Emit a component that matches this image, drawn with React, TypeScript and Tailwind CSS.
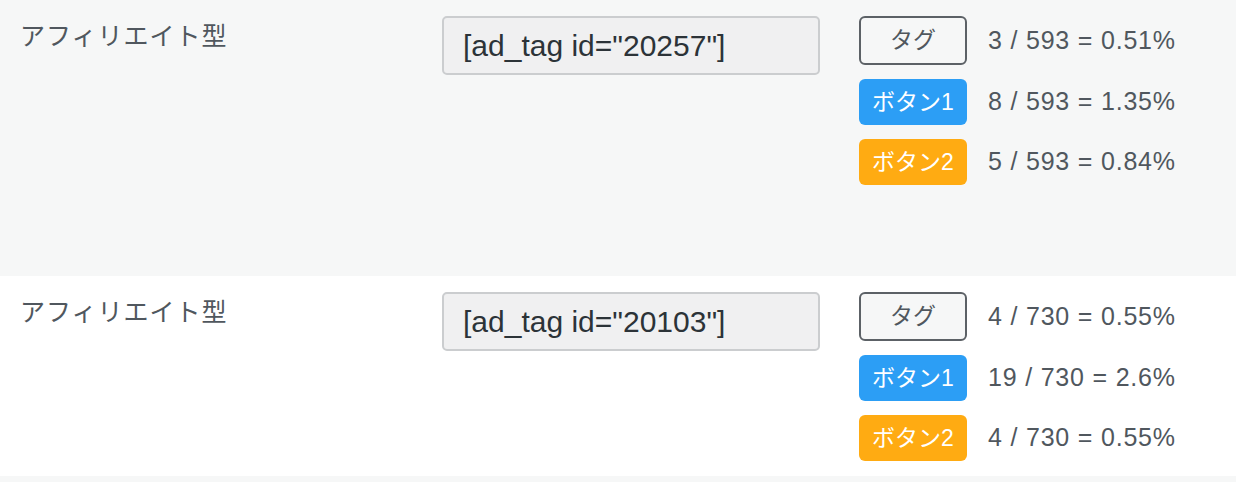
import React from "react";

type Stat = { tag: string; b1: string; b2: string };

const rows: { id: string; stats: Stat; bg: string; h: string }[] = [
  {
    id: "20257",
    stats: { tag: "3 / 593 = 0.51%", b1: "8 / 593 = 1.35%", b2: "5 / 593 = 0.84%" },
    bg: "bg-[#f6f7f7]",
    h: "h-[276px]",
  },
  {
    id: "20103",
    stats: { tag: "4 / 730 = 0.55%", b1: "19 / 730 = 2.6%", b2: "4 / 730 = 0.55%" },
    bg: "bg-white",
    h: "h-[200px]",
  },
];

const font = { fontFamily: '"Liberation Sans", "Noto Sans CJK JP", sans-serif' };

function Row({ id, stats, bg, h }: { id: string; stats: Stat; bg: string; h: string }) {
  return (
    <div className={`flex ${bg} ${h} pt-[16px] pl-[20px]`}>
      <div className="w-[422px] shrink-0 pt-[2px] text-[25px] leading-[36px] tracking-[1px] text-[#50575e]">
        アフィリエイト型
      </div>
      <div className="w-[378px] h-[59px] shrink-0 rounded-[5px] border-2 border-[#cbcdcf] bg-[#f0f0f1] pl-[19px] flex items-center text-[30px] text-[#2c3338]">
        [ad_tag id="{id}"]
      </div>
      <div className="ml-[39px] flex flex-col gap-[14px]">
        <div className="flex items-center">
          <div className="w-[108px] h-[49px] rounded-[6px] border-2 border-[#5c6166] bg-[#f6f7f7] flex items-center justify-center text-[23px] text-[#50575e]">
            タグ
          </div>
          <span className="ml-[21px] text-[25px] tracking-[0.8px] text-[#50575e]">{stats.tag}</span>
        </div>
        <div className="flex items-center">
          <div className="w-[108px] h-[46px] rounded-[6px] bg-[#2c9ef5] flex items-center justify-center text-[23px] text-white">
            ボタン1
          </div>
          <span className="ml-[21px] text-[25px] tracking-[0.8px] text-[#50575e]">{stats.b1}</span>
        </div>
        <div className="flex items-center">
          <div className="w-[108px] h-[46px] rounded-[6px] bg-[#ffab12] flex items-center justify-center text-[23px] text-white">
            ボタン2
          </div>
          <span className="ml-[21px] text-[25px] tracking-[0.8px] text-[#50575e]">{stats.b2}</span>
        </div>
      </div>
    </div>
  );
}

export default function App() {
  return (
    <div className="w-[1236px] h-[482px] bg-[#f6f7f7] overflow-hidden" style={font}>
      {rows.map((r) => (
        <Row key={r.id} {...r} />
      ))}
    </div>
  );
}
